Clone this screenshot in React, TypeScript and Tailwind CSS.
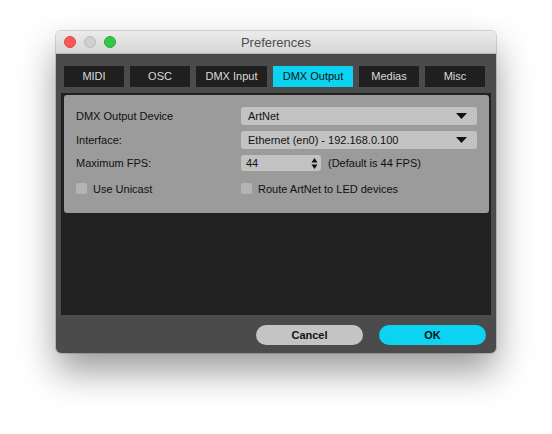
import React from "react";

const tabs = [
  { name: "MIDI", w: "w-[60px]" },
  { name: "OSC", w: "w-[60px]" },
  { name: "DMX Input", w: "w-[71px]" },
  { name: "DMX Output", w: "w-[80px]", active: true },
  { name: "Medias", w: "w-[60px]" },
  { name: "Misc", w: "w-[60px]" },
];

function Caret() {
  return (
    <svg width="11" height="6" viewBox="0 0 11 6" className="shrink-0">
      <path d="M0 0H11L5.5 6Z" fill="#111" />
    </svg>
  );
}

function Stepper() {
  return (
    <svg width="7" height="13" viewBox="0 0 7 13" className="shrink-0">
      <path d="M0.5 5.5L3.5 1L6.5 5.5Z" fill="#111" />
      <path d="M0.5 7.5L3.5 12L6.5 7.5Z" fill="#111" />
    </svg>
  );
}

function Select({ value }: { value: string }) {
  return (
    <div className="flex h-[18px] w-[236px] items-center justify-between rounded-[3px] bg-[#c2c2c2] pl-[7px] pr-[10px] text-[11px] text-[#111]">
      <span>{value}</span>
      <Caret />
    </div>
  );
}

function Check({ label }: { label: string }) {
  return (
    <div className="flex items-center gap-[6px] text-[11px] text-[#111]">
      <div className="h-[11px] w-[11px] rounded-[2px] bg-[#b3b3b3]" />
      <span>{label}</span>
    </div>
  );
}

export default function App() {
  return (
    <div className="min-h-[434px] bg-white pl-[56px] pt-[31px] font-['Liberation_Sans',Arial,sans-serif]">
      <div className="w-[440px] overflow-hidden rounded-[5px] shadow-[0_0_0_1px_rgba(0,0,0,0.15),0_18px_36px_rgba(0,0,0,0.4)]">
        <div className="relative flex h-[23px] items-center justify-center bg-gradient-to-b from-[#ececec] to-[#d6d6d6] border-b border-[#b5b5b5] pt-[2px]">
          <div className="absolute left-[8px] top-[5px] flex gap-[8px]">
            <div className="h-[12px] w-[12px] rounded-full bg-[#fc5753] border border-[#df4744]" />
            <div className="h-[12px] w-[12px] rounded-full bg-[#d0d0d0] border border-[#bcbcbc]" />
            <div className="h-[12px] w-[12px] rounded-full bg-[#33c748] border border-[#27aa35]" />
          </div>
          <span className="text-[13px] text-[#4d4d4d]">Preferences</span>
        </div>
        <div className="bg-[#4b4b4b] px-[5px] pb-[8px] pt-[12px]">
          <div className="flex gap-[6px] pl-[3px]">
            {tabs.map((t) => (
              <div
                key={t.name}
                className={`flex h-[21px] items-center justify-center text-[11px] ${t.w} ${
                  t.active ? "bg-[#0bd3f1] text-[#111]" : "bg-[#1f1f1f] text-[#dcdcdc]"
                }`}
              >
                {t.name}
              </div>
            ))}
          </div>
          <div className="mt-[6px] h-[222px] bg-[#212121] pl-[3px] pr-[2px] pt-[2px]">
            <div className="h-[118px] rounded-[3px] bg-[#9b9b9b] px-[12px] pt-[12px]">
              <div className="grid grid-cols-[165px_1fr] items-center gap-y-[6px] text-[11px] text-[#111]">
                <span>DMX Output Device</span>
                <Select value="ArtNet" />
                <span>Interface:</span>
                <Select value="Ethernet (en0) - 192.168.0.100" />
                <span>Maximum FPS:</span>
                <div className="flex items-center gap-[7px]">
                  <div className="flex h-[16px] w-[80px] items-center justify-between rounded-[3px] bg-[#c2c2c2] pl-[5px] pr-[3px]">
                    <span>44</span>
                    <Stepper />
                  </div>
                  <span>(Default is 44 FPS)</span>
                </div>
                <div className="mt-[3px]">
                  <Check label="Use Unicast" />
                </div>
                <div className="mt-[3px]">
                  <Check label="Route ArtNet to LED devices" />
                </div>
              </div>
            </div>
          </div>
          <div className="mt-[10px] flex justify-end gap-[16px] pr-[5px]">
            <button className="h-[20px] w-[107px] rounded-[10px] bg-[#c4c4c4] text-[11px] font-bold text-[#111]">
              Cancel
            </button>
            <button className="h-[20px] w-[107px] rounded-[10px] bg-[#0bd3f1] text-[11px] font-bold text-[#111]">
              OK
            </button>
          </div>
        </div>
      </div>
    </div>
  );
}
